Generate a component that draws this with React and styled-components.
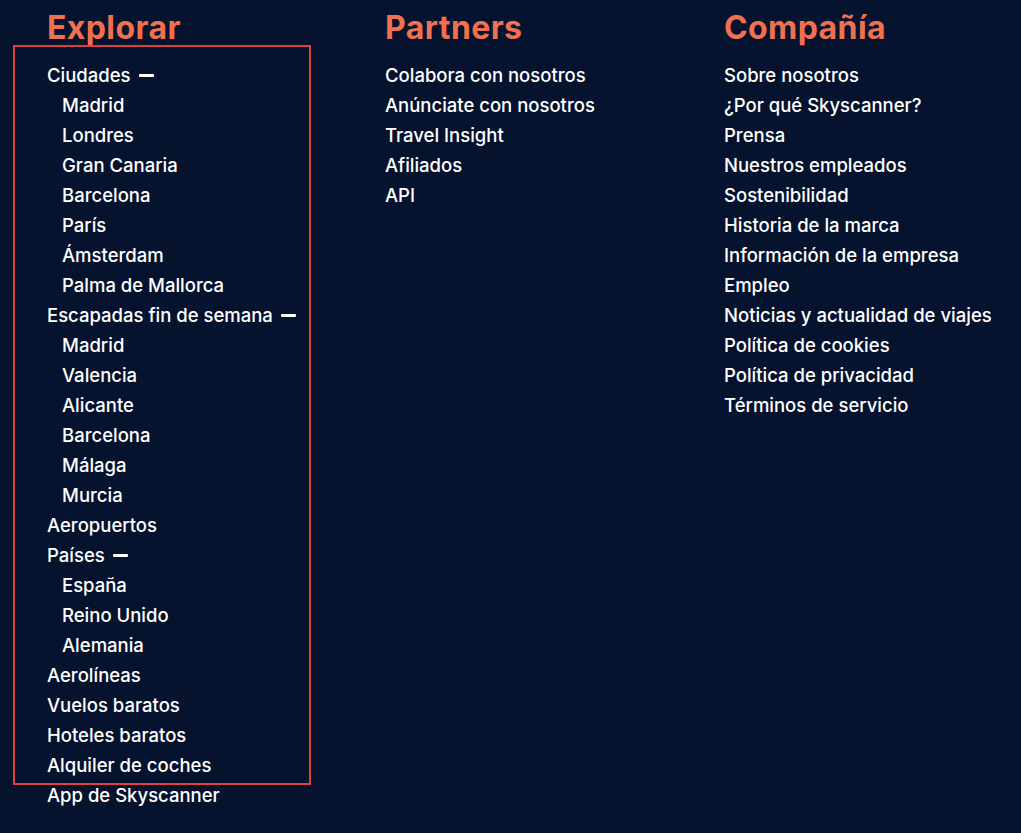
import React from "react";
import styled, { createGlobalStyle } from "styled-components";

const Global = createGlobalStyle`
  html, body { margin: 0; padding: 0; background: #05132f; }
  body { font-family: Inter, "Noto Sans", sans-serif; -webkit-font-smoothing: antialiased; }
`;

const Page = styled.div`
  width: 1021px;
  height: 833px;
  background: #05132f;
  box-sizing: border-box;
  padding: 8px 0 0 47px;
  display: grid;
  grid-template-columns: 338px 339px 1fr;
  overflow: hidden;
`;

const Column = styled.section`
  position: relative;
  display: flex;
  flex-direction: column;
`;

const Heading = styled.h2`
  margin: 0 0 12px 0;
  font-size: 32px;
  line-height: 40px;
  font-weight: 700;
  color: #f0704f;
  letter-spacing: 0.4px;
`;

const List = styled.ul`
  list-style: none;
  margin: 0;
  padding: 0;
`;

const Item = styled.li`
  display: flex;
  align-items: center;
  height: 30px;
  padding-left: ${(p) => (p.$sub ? "15px" : "0")};
  font-size: 18.5px;
  font-weight: 500;
  color: #ffffff;
  letter-spacing: 0;
  white-space: nowrap;
`;

const Dash = styled.span`
  display: inline-block;
  width: 15px;
  height: 3px;
  border-radius: 1px;
  background: #ffffff;
  margin-left: 8px;
`;

const Highlight = styled.div`
  position: absolute;
  left: -34px;
  top: 37px;
  width: 298px;
  height: 740px;
  box-sizing: border-box;
  border: 2.5px solid #e0403f;
  pointer-events: none;
`;

const explorar = [
  { t: "Ciudades", dash: true },
  { t: "Madrid", sub: true },
  { t: "Londres", sub: true },
  { t: "Gran Canaria", sub: true },
  { t: "Barcelona", sub: true },
  { t: "París", sub: true },
  { t: "Ámsterdam", sub: true },
  { t: "Palma de Mallorca", sub: true },
  { t: "Escapadas fin de semana", dash: true },
  { t: "Madrid", sub: true },
  { t: "Valencia", sub: true },
  { t: "Alicante", sub: true },
  { t: "Barcelona", sub: true },
  { t: "Málaga", sub: true },
  { t: "Murcia", sub: true },
  { t: "Aeropuertos" },
  { t: "Países", dash: true },
  { t: "España", sub: true },
  { t: "Reino Unido", sub: true },
  { t: "Alemania", sub: true },
  { t: "Aerolíneas" },
  { t: "Vuelos baratos" },
  { t: "Hoteles baratos" },
  { t: "Alquiler de coches" },
  { t: "App de Skyscanner" },
];

const partners = [
  "Colabora con nosotros",
  "Anúnciate con nosotros",
  "Travel Insight",
  "Afiliados",
  "API",
];

const compania = [
  "Sobre nosotros",
  "¿Por qué Skyscanner?",
  "Prensa",
  "Nuestros empleados",
  "Sostenibilidad",
  "Historia de la marca",
  "Información de la empresa",
  "Empleo",
  "Noticias y actualidad de viajes",
  "Política de cookies",
  "Política de privacidad",
  "Términos de servicio",
];

export default function App() {
  return (
    <>
      <Global />
      <Page>
        <Column>
          <Heading>Explorar</Heading>
          <List>
            {explorar.map((it, i) => (
              <Item key={i} $sub={it.sub}>
                {it.t}
                {it.dash && <Dash />}
              </Item>
            ))}
          </List>
          <Highlight />
        </Column>
        <Column>
          <Heading>Partners</Heading>
          <List>
            {partners.map((t) => (
              <Item key={t}>{t}</Item>
            ))}
          </List>
        </Column>
        <Column>
          <Heading>Compañía</Heading>
          <List>
            {compania.map((t) => (
              <Item key={t}>{t}</Item>
            ))}
          </List>
        </Column>
      </Page>
    </>
  );
}
